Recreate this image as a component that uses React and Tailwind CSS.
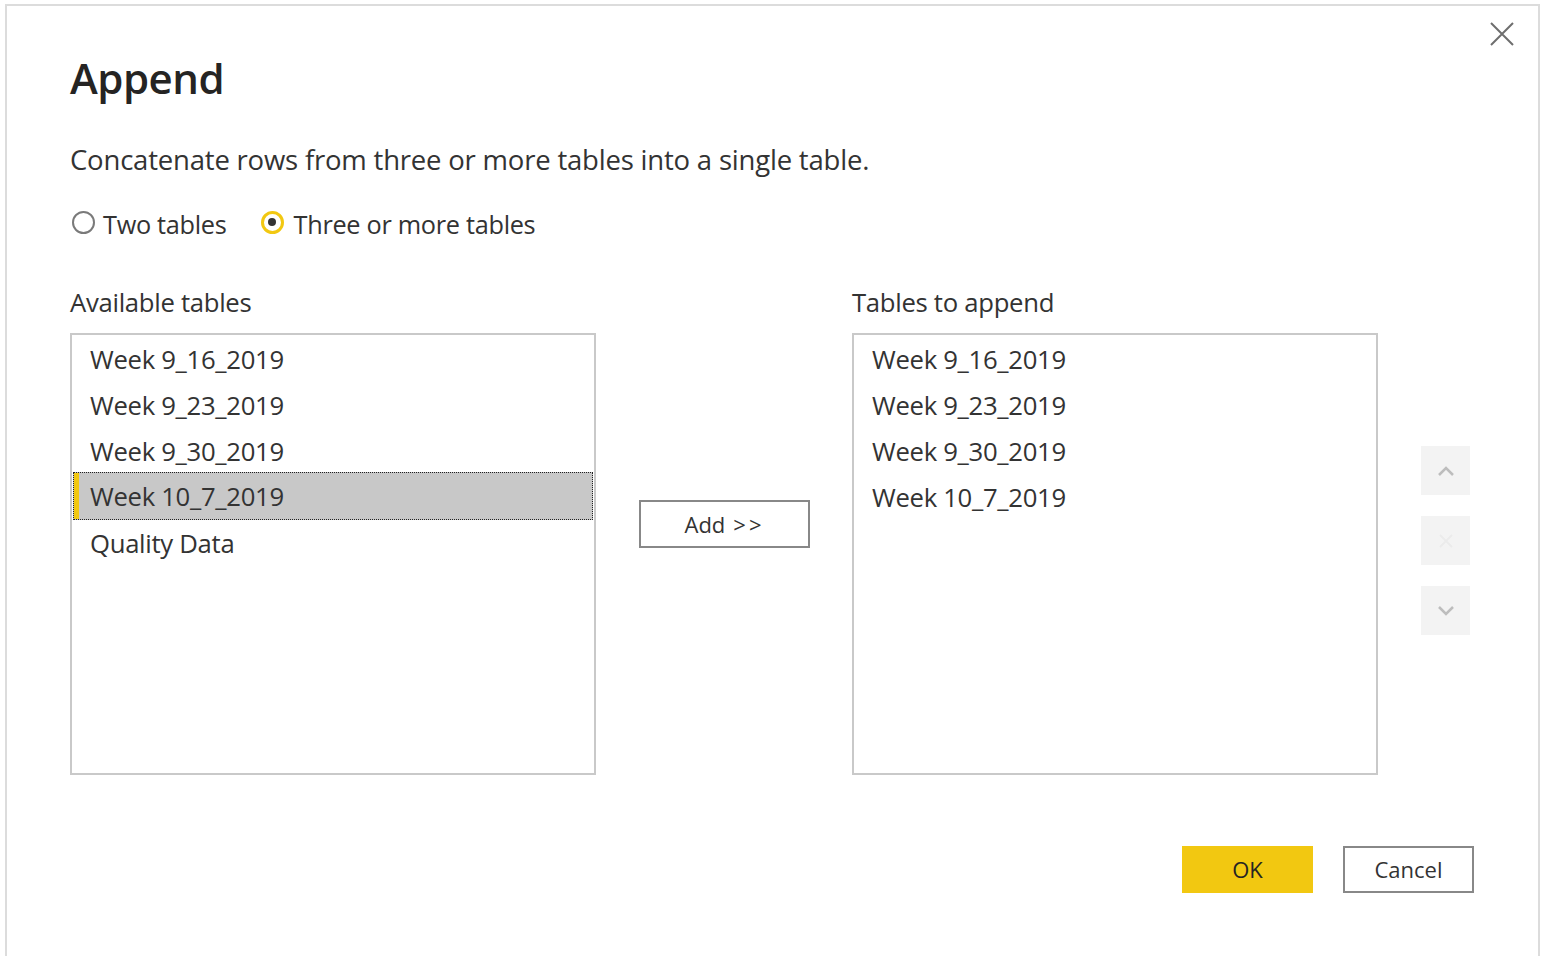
import React from 'react';

const font = { fontFamily: '"Open Sans", "Noto Sans", "Liberation Sans", sans-serif' };

const available = ['Week 9_16_2019', 'Week 9_23_2019', 'Week 9_30_2019', 'Week 10_7_2019', 'Quality Data'];
const toAppend = ['Week 9_16_2019', 'Week 9_23_2019', 'Week 9_30_2019', 'Week 10_7_2019'];

const ListBox = ({ items, selected }) => (
  <div className="w-[526px] h-[442px] border-2 border-[#c9c9c9] bg-white pt-[2px]">
    {items.map((item, i) =>
      i === selected ? (
        <div
          key={item}
          className="relative h-[48px] -mt-[3px] mb-[1px] mx-[1px] flex items-center pl-[16px] pt-[3px] bg-[#c8c8c8] border border-dotted border-[#222]"
        >
          <div className="absolute left-0 top-0 bottom-0 w-[5px] bg-[#f2c811]" />
          {item}
        </div>
      ) : (
        <div key={item} className="h-[46px] flex items-center pl-[18px]">
          {item}
        </div>
      )
    )}
  </div>
);

const SideButton = ({ children }) => (
  <div className="w-[49px] h-[49px] bg-[#f3f3f3] flex items-center justify-center">{children}</div>
);

export default function App() {
  return (
    <div className="w-[1545px] h-[956px] bg-white pt-[4px] pl-[5px] overflow-hidden text-[#333]" style={font}>
      <div className="relative w-[1535px] h-[980px] border-2 border-b-0 border-[#dcdcdc] pl-[63px]">
        <button className="absolute right-[22px] top-[14px] w-[28px] h-[28px] flex items-center justify-center">
          <svg width="26" height="26" viewBox="0 0 26 26" fill="none" stroke="#6e6e6e" strokeWidth="2">
            <path d="M2 2 L24 24 M24 2 L2 24" />
          </svg>
        </button>

        <h1 className="pt-[44px] text-[42px] leading-[56px] font-semibold text-[#252423] tracking-[-0.5px]">Append</h1>

        <p className="mt-[36px] text-[27.5px] leading-[36px] tracking-[-0.2px]">
          Concatenate rows from three or more tables into a single table.
        </p>

        <div className="mt-[28px] flex items-center text-[25.3px] leading-[36px] tracking-[-0.3px]">
          <div className="flex items-center ml-[2px]">
            <span className="w-[23px] h-[23px] rounded-full border-2 border-[#7a7a7a] mb-[4px]" />
            <span className="ml-[8px]">Two tables</span>
          </div>
          <div className="flex items-center ml-[34px]">
            <span className="w-[23px] h-[23px] rounded-full border-[3px] border-[#f2c811] mb-[4px] flex items-center justify-center">
              <span className="w-[8px] h-[8px] rounded-full bg-[#333]" />
            </span>
            <span className="ml-[10px]">Three or more tables</span>
          </div>
        </div>

        <div className="mt-[46px] flex text-[25.7px] tracking-[-0.3px]">
          <div>
            <div className="h-[30px] leading-[30px] mb-[15px]">Available tables</div>
            <ListBox items={available} selected={3} />
          </div>
          <div className="w-[256px] pt-[212px] pl-[43px]">
            <button className="w-[171px] h-[48px] border-2 border-[#888] bg-white text-[22px] tracking-normal flex items-center justify-center">
              Add <span className="ml-[8px] tracking-[3px]">&gt;&gt;</span>
            </button>
          </div>
          <div>
            <div className="h-[30px] leading-[30px] mb-[15px]">Tables to append</div>
            <ListBox items={toAppend} selected={-1} />
          </div>
          <div className="ml-[43px] pt-[158px] flex flex-col gap-[21px]">
            <SideButton>
              <svg width="18" height="12" viewBox="0 0 18 12" fill="none" stroke="#bdbdbd" strokeWidth="2.5">
                <path d="M2 10 L9 3 L16 10" />
              </svg>
            </SideButton>
            <SideButton>
              <svg width="16" height="16" viewBox="0 0 16 16" fill="none" stroke="#ebebeb" strokeWidth="2">
                <path d="M2 2 L14 14 M14 2 L2 14" />
              </svg>
            </SideButton>
            <SideButton>
              <svg width="18" height="12" viewBox="0 0 18 12" fill="none" stroke="#bdbdbd" strokeWidth="2.5">
                <path d="M2 2 L9 9 L16 2" />
              </svg>
            </SideButton>
          </div>
        </div>

        <div className="mt-[71px] flex justify-end pr-[64px] gap-[30px] text-[22px]">
          <button className="w-[131px] h-[47px] bg-[#f2c811] text-[#252423]">OK</button>
          <button className="w-[131px] h-[47px] border-2 border-[#888] bg-white">Cancel</button>
        </div>
      </div>
    </div>
  );
}
